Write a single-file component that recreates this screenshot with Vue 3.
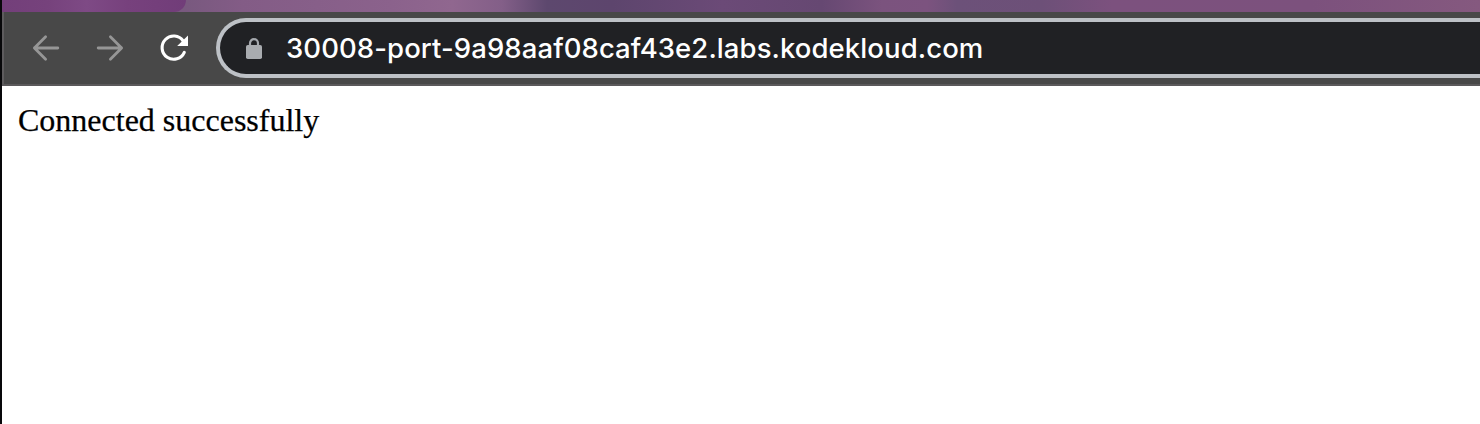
<script setup>
const address = '30008-port-9a98aaf08caf43e2.labs.kodekloud.com'
</script>

<template>
  <div class="window">
    <div class="tabstrip"><div class="tab"></div></div>
    <header class="toolbar">
      <svg class="icon nav" width="32" height="32" viewBox="0 0 32 32">
        <path d="M27.8 16H4.4M15.6 4.7L4.4 16L15.6 27.3" />
      </svg>
      <svg class="icon nav" width="32" height="32" viewBox="0 0 32 32">
        <path d="M4.2 16H27.6M16.4 4.7L27.6 16L16.4 27.3" />
      </svg>
      <svg class="icon" width="32" height="32" viewBox="0 0 32 32">
        <path class="arc" d="M25.2 9A11.6 11.6 0 1 0 26.3 20.3" />
        <path class="head" d="M30 3.4V14H19.2Z" />
      </svg>
      <div class="omnibox">
        <svg class="lock" width="16" height="22" viewBox="0 0 16 22">
          <path d="M4 9V6.2a4 4 0 0 1 8 0V9" />
          <rect x="0" y="8" width="16" height="14" rx="1.8" />
        </svg>
        <span class="address">{{ address }}</span>
      </div>
    </header>
    <main class="page">Connected successfully</main>
  </div>
</template>

<style>
body {
  margin: 0;
  overflow: hidden;
}
</style>

<style scoped>
.window {
  box-sizing: border-box;
  width: 1480px;
  height: 424px;
  border-left: 2px solid #08080a;
  background: #fff;
  overflow: hidden;
}
.tabstrip {
  height: 12px;
  background: linear-gradient(90deg, #785984 0, #79597f 185px, #835c86 240px, #8b628c 390px, #90678f 450px, #835f88 500px, #5d486e 545px, #5d456d 610px, #6b4a77 720px, #664872 820px, #7b537e 880px, #7c537f 925px, #6c5179 955px, #6d5078 1040px, #7c517e 1110px, #7c517d 1310px, #85597f 1478px);
}
.tab {
  width: 184px;
  height: 12px;
  border-radius: 0 0 14px 0;
  background: linear-gradient(90deg, #733f7a 0, #76427c 45px, #7e4a85 85px, #77417d 125px, #713d79 184px);
}
.toolbar {
  box-sizing: border-box;
  display: flex;
  align-items: center;
  height: 74px;
  padding-left: 26px;
  border-left: 2px solid #5e5c5e;
  border-bottom: 2px solid #5b595b;
  background: #484848;
}
.icon {
  flex: none;
  fill: none;
}
.nav {
  margin: -1px 32px 0 0;
  stroke: #969696;
  stroke-width: 2.8;
  stroke-linecap: round;
  stroke-linejoin: round;
}
.arc {
  stroke: #fff;
  stroke-width: 3.1;
  stroke-linecap: round;
}
.head {
  fill: #fff;
}
.omnibox {
  box-sizing: border-box;
  flex: 1;
  display: flex;
  align-items: center;
  height: 60px;
  margin-left: 26px;
  padding-left: 26px;
  border: 4px solid #bdc1c6;
  border-right: 0;
  border-radius: 30px 0 0 30px;
  background: #202124;
}
.lock {
  flex: none;
  margin-right: 24px;
}
.lock path {
  fill: none;
  stroke: #a4a8ad;
  stroke-width: 2.2;
}
.lock rect {
  fill: #a9acb0;
}
.address {
  color: #fff;
  font: 500 27.5px/34px Inter, sans-serif;
  letter-spacing: 0.09px;
  white-space: nowrap;
}
.page {
  padding: 16px;
  color: #000;
  font: 32px/37px "Liberation Serif", "Times New Roman", serif;
  -webkit-text-stroke: 0.25px #000;
}
</style>
